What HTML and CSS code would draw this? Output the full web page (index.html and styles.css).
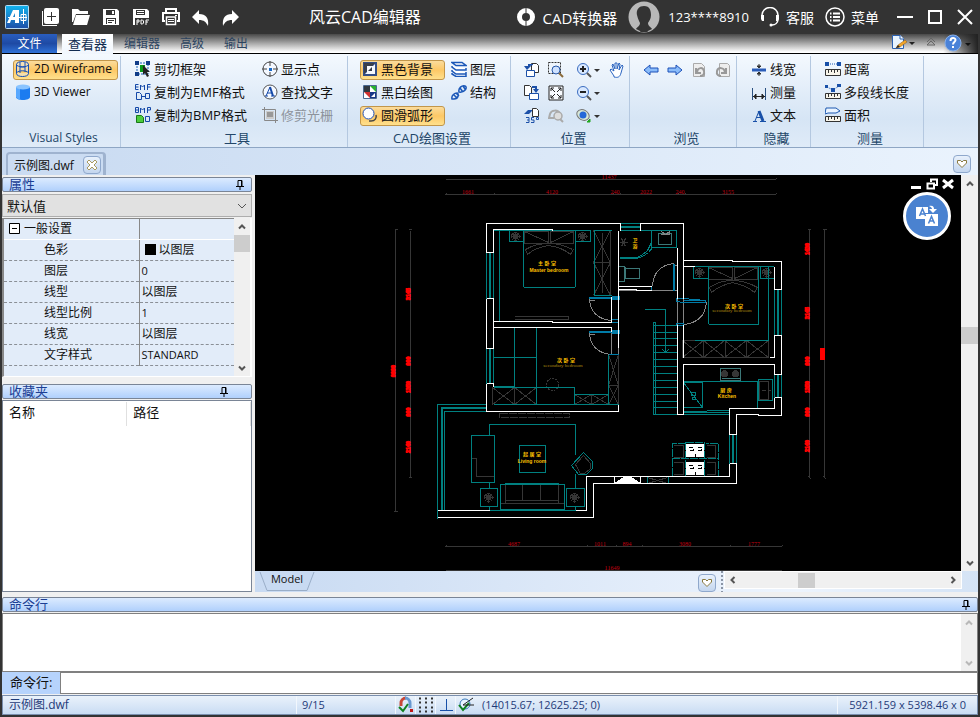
FILE: index.html
```html
<!DOCTYPE html>
<html lang="zh-CN">
<head>
<meta charset="utf-8">
<title>风云CAD编辑器</title>
<link rel="stylesheet" href="styles.css">
</head>
<body>
<div class="app">
<header class="titlebar">
  <svg class="logo" viewBox="0 0 24 24"><defs><linearGradient id="lg" x1="0" y1="0" x2="0" y2="1"><stop offset="0" stop-color="#12b4ee"/><stop offset="1" stop-color="#1d4fa8"/></linearGradient></defs><rect x=".5" y=".5" width="23" height="23" rx="1" fill="url(#lg)" stroke="#b8dcf4"/><path d="M2 18 8 5h6v13h-4v-3H6l-1 3z" fill="#fff"/><path d="M8 12l2-4v4z" fill="#1b83cc"/><path d="M3 12.500h19M18.500 4v15M16 9.500h5v6h-5z" stroke="#fff" fill="none"/></svg>
  <nav class="quick">
    <button aria-label="新建"><svg viewBox="0 0 20 20"><path d="M5 1h11a2 2 0 0 1 2 2v12a2 2 0 0 1-2 2H5a2 2 0 0 1-2-2V3a2 2 0 0 1 2-2z" fill="#fff"/><path d="M1.500 4v14.500H16" stroke="#fff" fill="none"/><path d="M10.500 5v9M6 9.500h9" stroke="#333"/></svg></button>
    <button aria-label="打开"><svg viewBox="0 0 20 20"><path d="M1 15V2h6l2 2h8v3H5L2 15z" fill="#fff"/><path d="M5 8h14l-3 10H2z" fill="#fff"/></svg></button>
    <button aria-label="保存"><svg viewBox="0 0 20 20"><path d="M2 2h14l2 2v14H2z" fill="#fff"/><path d="M5 3h9v5H5zM5 11h10v6H5z" fill="#333"/><path d="M11 4h2v3h-2zM6 12h8v5H6z" fill="#fff"/><path d="M7 13.500h6M7 15.500h4" stroke="#333"/></svg></button>
    <button aria-label="保存为PDF"><svg viewBox="0 0 20 20"><path d="M2 2h14l2 2v14H2z" fill="#fff"/><path d="M5 3h9v5H5zM4 11h14v7H4z" fill="#333"/><path d="M6 4.500h7M6 6.500h7M6 18v-5h2v2H6M10 13v4h1.500l1-1v-2l-1-1zM15 18v-5h3M15 15h2" stroke="#fff" fill="none"/></svg></button>
    <button aria-label="打印"><svg viewBox="0 0 20 20"><path d="M5 6V2h10v4M4 14H2V6h16v8h-2" fill="none" stroke="#fff" stroke-width="2"/><path d="M5.500 10h9v7.500h-9z" fill="none" stroke="#fff" stroke-width="1.500"/><path d="M7 12.500h6M7 14.500h6M14 8.500h2" stroke="#fff"/></svg></button>
    <button aria-label="撤销"><svg viewBox="0 0 20 20"><path d="M8 3v4c7 0 10 4 9 12-2-4-4-6-9-6v4L1 10z" fill="#fff"/></svg></button>
    <button aria-label="重做"><svg viewBox="0 0 20 20"><path d="M11 3v4C4 7 1 11 2 19c2-4 4-6 9-6v4l7-7z" fill="#fff"/></svg></button>
  </nav>
  <h1>风云CAD编辑器</h1>
  <div class="account">
    <button class="convert"><svg class="i20" viewBox="0 0 20 20"><circle cx="10" cy="10" r="6.500" fill="none" stroke="#fff" stroke-width="5"/><path d="M10 0v6M10 14v6" stroke="#333"/></svg>CAD转换器</button>
    <button class="user"><svg class="i32" viewBox="0 0 32 32"><circle cx="16" cy="16" r="15.500" fill="#b8b8b8"/><path d="M16 5c-6 0-8 5-7 9s2 6 3 8c0 3-3 4-4 6q8 5 16 0c-1-2-4-3-4-6 1-2 3-4 3-8s-1-9-7-9z" fill="#333"/><path d="M12 31c2-3 1-4 1-6h6c0 2-1 3 1 6z" fill="#333"/></svg>123****8910</button>
    <button><svg class="i20" viewBox="0 0 20 20"><path d="M2 11V8a8 7.500 0 0 1 16 0v4c0 4-3 6-6 6" fill="none" stroke="#fff" stroke-width="1.500"/><path d="M1 8h3v6H2l-1-2zM19 8h-3v6h2l1-2z" fill="#fff"/><circle cx="11" cy="18" r="1.500" fill="#fff"/></svg>客服</button>
    <button><svg class="i20" viewBox="0 0 20 20"><circle cx="10" cy="10" r="9" fill="none" stroke="#fff" stroke-width="1.500"/><path d="M5 6.500h1.500M5 10h1.500M5 13.500h1.500M8 6.500h7M8 10h7M8 13.500h7" stroke="#fff" stroke-width="2"/></svg>菜单</button>
  </div>
  <div class="winctl">
    <button aria-label="最小化"><svg viewBox="0 0 16 16"><path d="M0 8h16" stroke="#fff" stroke-width="2"/></svg></button>
    <button aria-label="最大化"><svg viewBox="0 0 16 16"><path d="M2 2h12v12H2z" fill="none" stroke="#fff" stroke-width="2"/></svg></button>
    <button aria-label="关闭"><svg viewBox="0 0 16 16"><path d="M1 1l14 14M15 1 1 15" stroke="#fff" stroke-width="2"/></svg></button>
  </div>
</header>

<div class="frame">
<nav class="tabs">
  <button class="file">文件</button><button class="tab on">查看器</button><button class="tab">编辑器</button><button class="tab">高级</button><button class="tab">输出</button>
  <div class="helpers">
    <button aria-label="样式"><svg class="w24" viewBox="0 0 24 17"><path d="M1.500 1.500h8l3 3v10h-11z" fill="#e8f4ff" stroke="#2a60b0"/><path d="M9 1v4h4" fill="#fff" stroke="#2a60b0"/><path d="M5 14l2-3 7-5 2 2-7 5z" fill="#f2a52a" stroke="#8a5a1a" stroke-width=".500"/><path d="M5 14l2-3 2 2z" fill="#222"/><path d="M18 8h6l-3 3z" fill="#222"/></svg></button>
    <button aria-label="折叠功能区"><svg class="i16" viewBox="0 0 16 16"><path d="M4 8l4-4 4 4M4 11l4-4 4 4z" fill="none" stroke="#666"/></svg></button>
    <button aria-label="帮助"><svg class="w30" viewBox="0 0 30 18"><circle cx="9" cy="9" r="8" fill="#4a82d8" stroke="#86aee8"/><path d="M6.500 7c0-4 5-3.500 5-1 0 2-2.500 2-2.500 4.500M9 12v2" fill="none" stroke="#fff" stroke-width="2"/><path d="M21 9h6l-3 3z" fill="#111"/></svg></button>
  </div>
</nav>

<section class="ribbon">
  <div class="group g1"><div class="tools">
    <button class="t on"><svg viewBox="0 0 16 16"><path d="M1.500 3.500v9c0 4 12 4 12 0v-9c0-4-12-4-12 0c0 3 12 3 12 0M5 1v11M10 1v10M1.500 12c2-3 10-3 12 0M5 6h5" fill="#e6f0ff" fill-opacity=".4" stroke="#1450b8"/></svg>2D Wireframe</button>
    <button class="t"><svg viewBox="0 0 16 16"><path d="M1 3v10c0 4 14 4 14 0V3z" fill="#1c7cf0"/><path d="M1 3v10q1 2 4 3V5z" fill="#58a8ff"/><ellipse cx="8" cy="3" rx="7" ry="2.500" fill="#8ac4ff"/></svg>3D Viewer</button>
  </div><h2>Visual Styles</h2></div>

  <div class="group g2"><div class="tools">
    <button class="t"><svg viewBox="0 0 16 16"><path d="M2 2h11v11H2z" fill="none" stroke="#1860b8" stroke-dasharray="2 1"/><path d="M0 0h4v4H0zM11 0h4v4h-4zM0 11h4v4H0z" fill="#103c88"/><path d="M5 4h5v7H5z" fill="#0a9a1a"/><path d="M8 4l7 7h-3l2 4-2 1-2-4-2 2z" fill="#222"/></svg>剪切框架</button>
    <button class="t"><svg viewBox="0 0 16 16"><path d="M3.500.5h-3v5h3M.5 3h3M5.500 6V1l2 2 2-2v5M12.500 6V.5h3M12.500 3h3M1.500 15.500v-7h3l2 2v5zM7 12.500h3M10.500 14.500v-5h4v5z" fill="none" stroke="#1448a8"/></svg>复制为EMF格式</button>
    <button class="t"><svg viewBox="0 0 16 16"><path d="M.5 5.500v-5h3v5zM.5 3h3M5.500 6V1l2 2 2-2v5M12.500 6V.5h3V3h-3M10.500 14.500v-5h4v5z" fill="none" stroke="#1448a8"/><path d="M1.500 8.500h5l2 2v5h-7z" fill="#4ccc3c" stroke="#187818"/></svg>复制为BMP格式</button>
    <button class="t"><svg viewBox="0 0 16 16"><circle cx="8" cy="8" r="7" fill="#f4f8ff" stroke="#444"/><path d="M8 0v5M8 11v5M0 8h5M11 8h5" stroke="#444"/><path d="M7 7h3v3H7z" fill="#1468c8"/></svg>显示点</button>
    <button class="t"><svg viewBox="0 0 16 16"><circle cx="8" cy="8" r="7" fill="#f4f8ff" stroke="#555"/><path d="M4 12 8 3M5 9h5M3 12h3M9 12h4" fill="none" stroke="#1448a8"/><path d="M8 3l3 9" stroke="#1448a8" stroke-width="2"/></svg>查找文字</button>
    <button class="t" disabled><svg viewBox="0 0 16 16"><path d="M2.500 0v13.500H16M0 2.500h13.500V16" fill="none" stroke="#888"/><path d="M4 4h8v8H4z" fill="#ccc"/><path d="M5 5h6v5H5z" fill="#999"/></svg>修剪光栅</button>
  </div><h2>工具</h2></div>

  <div class="group g3"><div class="tools">
    <button class="t on"><svg viewBox="0 0 16 16"><path d="M1 1h14v14H1z" fill="#334d86"/><path d="M2 2h11L2 13z" fill="#3a3f4a"/><path d="M13 3v10H3z" fill="#f4f7fc"/><path d="M5 5h6v6H5z" fill="#f8faff"/><path d="M6 10l4-4v4z" fill="#333a48"/></svg>黑色背景</button>
    <button class="t"><svg viewBox="0 0 16 16"><path d="M1.500 1.500h13v13h-13z" fill="#fff" stroke="#4a6890"/><path d="M2 2h6v6H2z" fill="#303840"/><path d="M8 2h6v6z" fill="#28b030"/><path d="M2 8h6v6z" fill="#d03030"/><path d="M8 8h6v6H8z" fill="#183888"/><path d="M9 13l4-4v4z" fill="#fff"/></svg>黑白绘图</button>
    <button class="t on"><svg viewBox="0 0 16 16"><path d="M14 8c1 3-1 6-5 6H7" fill="none" stroke="#444" stroke-width="1.500"/><circle cx="6.500" cy="6.500" r="5.500" fill="#fff" stroke="#1e50b8"/></svg>圆滑弧形</button>
    <button class="t"><svg viewBox="0 0 16 16"><path d="M1 1.500h10l4 3H5zM1 5v1l4 3h10v-2M1 9v1l4 3h10v-2M1 12v1l4 2.500h10v-2" fill="#fff" stroke="#1c58b8" stroke-width="1.500"/></svg>图层</button>
    <button class="t"><svg viewBox="0 0 16 16"><path d="M1 15c-1-4 3-6 5-6s2 6-3 6zM8 8c-1-4 3-7 6-6s0 7-6 6zM3 11l3 3M5 9l3 3M9 4l3 4M12 2l2 3" fill="none" stroke="#1c58b8" stroke-width="1.500"/></svg>结构</button>
  </div><h2>CAD绘图设置</h2></div>

  <div class="group g4"><div class="tools icons">
    <button aria-label="左旋"><svg viewBox="0 0 16 16"><path d="M7.500 1.500h5l2 2v7h-7z" fill="#fff" stroke="#333"/><path d="M2.500 8.500h8v6h-8z" fill="#fff" stroke="#1c50a8"/><path d="M9 2H4v2H0l3 4 4-4H6l3-1z" fill="#1c50a8"/></svg></button>
    <button aria-label="右旋"><svg viewBox="0 0 16 16"><path d="M.5.5h5l2 2v8h-7z" fill="#fff" stroke="#333"/><path d="M5.500 8.500h9v6h-9z" fill="#fff" stroke="#1c50a8"/><path d="M8 1h5v3h2l-3 4-3-4h2V3H8z" fill="#1c50a8"/></svg></button>
    <button aria-label="旋转35度"><svg viewBox="0 0 16 16"><path d="M8.500.5h4l2 2v6h-6z" fill="#fff" stroke="#333"/><path d="M8 2H4L0 6h5l3-3z" fill="#1c50a8"/><path d="M2 9.500h3v5H2M3 12h2M10 9.500H7.500V12H10v2.500H7M12.500 9.500h2v2h-2z" fill="none" stroke="#1c50a8"/></svg></button>
    <button aria-label="窗口缩放"><svg viewBox="0 0 16 16"><path d="M.5.500h12v11H.5z" fill="none" stroke="#333" stroke-dasharray="2 1"/><circle cx="8" cy="8" r="4" fill="#cfe2ff" stroke="#2858a8"/><path d="M11 11l4 4" stroke="#8a6a3a" stroke-width="2"/></svg></button>
    <button aria-label="全部显示"><svg viewBox="0 0 16 16"><path d="M1 1h14v14H1z" fill="#f8fbff" stroke="#222"/><path d="M3 6V3h3M10 3h3v3M13 10v3h-3M6 13H3v-3M3 3l4 4M13 3 9 7M13 13 9 9M3 13l4-4" fill="none" stroke="#222"/></svg></button>
    <button aria-label="上一视图" disabled><svg viewBox="0 0 16 16"><path d="M6 10H1l1-4c1-4 8-5 10 0" fill="none" stroke="#aaa" stroke-width="2"/><circle cx="10" cy="8" r="4" fill="#ddd" stroke="#aaa" stroke-width="1.500"/><path d="M12 11l3 3" stroke="#aaa" stroke-width="2"/></svg></button>
    <button aria-label="放大"><svg class="wide" viewBox="0 0 24 16"><circle cx="7" cy="7" r="5.500" fill="#d8e8ff" stroke="#3a6cc0"/><path d="M11 11l4 4" stroke="#555" stroke-width="2"/><path d="M4 7h6M7 4v6" stroke="#222" stroke-width="2"/><path d="M18 7h6l-3 3z" fill="#333"/></svg></button>
    <button aria-label="缩小"><svg class="wide" viewBox="0 0 24 16"><circle cx="7" cy="7" r="5.500" fill="#d8e8ff" stroke="#3a6cc0"/><path d="M11 11l4 4" stroke="#555" stroke-width="2"/><path d="M4 7h6" stroke="#222" stroke-width="2"/><path d="M18 7h6l-3 3z" fill="#333"/></svg></button>
    <button aria-label="视图"><svg class="wide" viewBox="0 0 24 16"><ellipse cx="7" cy="7" rx="6.500" ry="5" transform="rotate(30 7 7)" fill="#d8e8d8" stroke="#777"/><circle cx="7" cy="7" r="3.500" fill="#2468d8"/><path d="M11 14h3v-3z" fill="#22a822" stroke="#22a822"/><path d="M18 7h6l-3 3z" fill="#333"/></svg></button>
    <button aria-label="平移"><svg viewBox="0 0 16 16"><path d="M5 14 1 8l1-1 3 2-2-6 1-1 2 5V1h2v6l2-6 1 1-1 6 3-5 1 1-2 7c-1 4-3 5-7 4z" fill="#fff" stroke="#2a64c0"/></svg></button>
  </div><h2>位置</h2></div>

  <div class="group g5"><div class="tools nav">
    <button aria-label="后退"><svg viewBox="0 0 16 16"><path d="M1 8l6-5v3h8v4H7v3z" fill="#8abcfa" stroke="#1c50b8"/></svg></button>
    <button aria-label="前进"><svg viewBox="0 0 16 16"><path d="M15 8 9 3v3H1v4h8v3z" fill="#8abcfa" stroke="#1c50b8"/></svg></button>
    <button aria-label="上一页" disabled><svg viewBox="0 0 16 16"><path d="M2.500 1.500h8l3 3v10h-11z" fill="#eee" stroke="#aaa"/><path d="M5 6v5h5M6 10c1-5 6-5 7-1s-2 5-4 5" fill="none" stroke="#999" stroke-width="2"/></svg></button>
    <button aria-label="下一页" disabled><svg viewBox="0 0 16 16"><path d="M4.500 1.500h8l2 2v11h-10z" fill="#eee" stroke="#aaa"/><path d="M11 6v5H6M10 10c-1-5-7-5-8-1s2 5 4 5" fill="none" stroke="#999" stroke-width="2"/></svg></button>
  </div><h2>浏览</h2></div>

  <div class="group g6"><div class="tools">
    <button class="t"><svg viewBox="0 0 16 16"><path d="M1 9h14" stroke="#2a5cb8" stroke-width="3"/><path d="M8 3v4M8 11v4M6 5h4L8 7zM6 13h4l-2-2z" stroke="#333" fill="#333"/></svg>线宽</button>
    <button class="t"><svg viewBox="0 0 16 16"><path d="M1.500 4v12M14.500 4v12" stroke="#2a5080"/><path d="M2 12.500h12M5 10l-2 2.500L5 15zM11 10l2 2.500-2 2.500z" stroke="#222" fill="#222"/></svg>测量</button>
    <button class="t"><svg viewBox="0 0 16 16"><path d="M2 14.500h4M9 14.500h6M4 14 8 4M5 10.500h5" fill="none" stroke="#1850a8"/><path d="M8 4l4 10" stroke="#1850a8" stroke-width="3"/></svg>文本</button>
  </div><h2>隐藏</h2></div>

  <div class="group g7"><div class="tools">
    <button class="t"><svg viewBox="0 0 16 16"><path d="M3 3h10" stroke="#1c58b0" stroke-dasharray="1 1"/><path d="M0 1h4v4H0zM12 1h4v4h-4z" fill="#1850a8"/><path d="M.5 8.500h15v6H.5z" fill="#f8f5ea" stroke="#333"/><path d="M3.500 9v3M6.500 9v2M9.500 9v3M12.500 9v2" stroke="#333"/></svg>距离</button>
    <button class="t"><svg viewBox="0 0 16 16"><path d="M2 3l6 3 6-4" stroke="#1c58b0" stroke-dasharray="1 1" fill="none"/><path d="M0 1h3v3H0zM6 4h4v4H6zM12 0h4v3h-4z" fill="#1850a8"/><path d="M.5 9.500h15v5H.5z" fill="#f8f5ea" stroke="#333"/><path d="M3.500 10v3M6.500 10v2M9.500 10v3M12.500 10v2" stroke="#333"/></svg>多段线长度</button>
    <button class="t"><svg viewBox="0 0 16 16"><path d="M1 1h10l4 3-4 2H3l-3 1z" fill="#eaf4ff" stroke="#1c58b0"/><path d="M.5 9.500h15v5H.5z" fill="#f8f5ea" stroke="#333"/><path d="M3.500 10v3M6.500 10v2M9.500 10v3M12.500 10v2" stroke="#333"/></svg>面积</button>
  </div><h2>测量</h2></div>
</section>

<div class="docs">
  <div class="doc"><span>示例图.dwf</span><button aria-label="关闭文档"><svg viewBox="0 0 12 12"><path d="M1 3l2-2 3 3 3-3 2 2-3 3 3 3-2 2-3-3-3 3-2-2 3-3z" fill="#fff" stroke="#a89a60"/></svg></button></div>
  <button class="heart" aria-label="文档列表"><svg viewBox="0 0 12 12"><path d="M1.500 4V2.500h3L6 4l1.500-1.500h3V5L6 9.500 1.500 5z" fill="#fff" stroke="#8a7a40"/></svg></button>
</div>

<main class="work">
  <aside class="side">
    <div class="head"><h3>属性</h3><svg class="pin" viewBox="0 0 8 10"><path d="M2 6V.5h4V6M0 6.500h8M4 7v3M5.500 1v5" fill="none" stroke="#000"/></svg></div>
    <div class="pick"><select aria-label="对象"><option>默认值</option></select><svg viewBox="0 0 10 6"><path d="M1 1l4 4 4-4" fill="none" stroke="#555"/></svg></div>
    <div class="props">
      <table>
        <tr class="sec"><th><svg viewBox="0 0 11 11"><path d="M.5.5h10v10H.5zM3 5.500h5" fill="#fff" stroke="#000"/></svg>一般设置</th><td></td></tr>
        <tr><th>色彩</th><td><i class="swatch"></i>以图层</td></tr>
        <tr><th>图层</th><td>0</td></tr>
        <tr><th>线型</th><td>以图层</td></tr>
        <tr><th>线型比例</th><td>1</td></tr>
        <tr><th>线宽</th><td>以图层</td></tr>
        <tr><th>文字样式</th><td>STANDARD</td></tr>
      </table>
      <div class="vbar"><button aria-label="向上"><svg viewBox="0 0 8 8"><path d="M1 5.500l3-3 3 3" fill="none" stroke="#555" stroke-width="2"/></svg></button><i class="thumb"></i><button class="end" aria-label="向下"><svg viewBox="0 0 8 8"><path d="M1 2.500l3 3 3-3" fill="none" stroke="#555" stroke-width="2"/></svg></button></div>
    </div>
    <div class="head fav"><h3>收藏夹</h3><svg class="pin" viewBox="0 0 8 10"><path d="M2 6V.5h4V6M0 6.500h8M4 7v3M5.500 1v5" fill="none" stroke="#000"/></svg></div>
    <div class="favlist"><table><tr><th>名称</th><th>路径</th></tr></table></div>
  </aside>

  <section class="view">
    <div class="canvas">
      <svg class="plan" viewBox="255 175 706 396" shape-rendering="crispEdges">
       <defs>
        <g id="lamp"><circle r="4"/><path d="M-5 0h10M0-5v10M-3-3l6 6M-3 3l6-6"/><circle r="2"/></g>
       </defs>
       <g fill="none" stroke-width="1" transform="translate(-.5 .5)">
        <g stroke="#363636">
          <path d="M446 179H776M446 194H776M446 546H782M446 570H782M810 229V477M825 229V477M396 229V511M411 230V477"/>
          <path d="M445 195l2-2M493 195l2-2M612 195l2-2M619 195l2-2M677 195l2-2M684 195l2-2M775 195l2-2M775 180l2-2M445 547l2-2M586 547l2-2M615 547l2-2M641 547l2-2M729 547l2-2M781 547l2-2M808 229h3M823 229h4M809 476l3 3M824 476l3 3M395 229h3M409 229h3M394 511h4M409 477h3"/>
          <path d="M525 231h24v12h-24zM551 231h23v12h-23zM525 231l24 11M551 242l23-11M526 249q10-6 23-6t24 6M526 249l2 5q8-7 21-9 14 2 22 9l3-5M515 316h54v3h-54"/>
          <path d="M594 230h17v65M594 230l17 32-17 33M611 230l-17 32 17 33M594 262h17M603 232v60"/>
          <path d="M493 387l22 17 22-17M493 404l22-17 22 17M515 387v17M493 387v17M575 394l17 10 17-10M575 404l17-10 17 10M592 394v10M609 354l10 31M619 354l-10 31M609 385h10M609 385l10 19M619 385l-10 19M619 354v50"/>
          <circle cx="553" cy="384" r="6" stroke-dasharray="2 1"/>
          <path d="M500 413h70v4h-70z" stroke-dasharray="8 1"/>
          <path d="M471 458h6v18h18M506 484v16h53v-16M523 484v16M541 484v16M501 503h64M506 500v3M559 500v3"/>
          <path d="M709 267h24v12h-24zM735 267h23v12h-23zM709 267l24 11M735 278l23-11M710 287q10-7 23-7t25 7M710 287l2 5q8-7 21-10 14 3 22 10l3-5"/>
          <path d="M683 340h86v17h-86zM683 340l21 17 21-17 22 17 22-17M683 357l21-17 21 17 22-17 22 17M704 340v17M726 340v17M747 340v17"/>
          <path d="M760 381h9v18h-9zM762 390h4M769 390h2M648 477l20 6M648 483l20-6M674 445h10v12h-10M674 462h10v12h-10M707 445h9v12h-9M707 462h9v12h-9"/>
          <path d="M576 464l8-9 7 8v5l-6 5h-4z"/>
          <use href="#lamp" x="516" y="236"/><use href="#lamp" x="583" y="236"/><use href="#lamp" x="700" y="272"/><use href="#lamp" x="767" y="272"/><use href="#lamp" x="489" y="497"/><use href="#lamp" x="575" y="497"/>
          <path d="M620 242h8M622 238l4 8M626 238l-4 8"/>
          <circle cx="725" cy="373" r="3" fill="#363636"/><circle cx="736" cy="373" r="3" fill="#363636"/>
        </g>
        <g stroke="#008080">
          <path d="M487 252v46M490 252v46M491 252v46M494 252v46M487 348v35M490 348v35M491 348v35M494 348v35M500 230v91M494 230h97M510 230v11h14M591 230v11h-16M524 230v56l1 1h50l1-1v-56M595 230v65h17M594 230h18"/>
          <path d="M621 223h20M621 227h20M621 226h20M621 230h20M641 230h36v17h-25v-17M652 230v12l-4 8-6 5-5 2h-17M653 247l-4 5-6 4-6 2h-17"/>
          <path d="M515 327v59h-21M537 327v77M494 357h43M494 387h81v17M575 394h34M609 354v50M494 404h125"/>
          <path d="M487 404h-49v114M487 407h-45v103M487 408h-44v102M487 411h-42v99M490 435v-11h86v30M576 473v15M490 482v6M490 506v4h86v-4M472 435h23v47h-23zM520 445h26v27h-26zM481 488h17v18h-17zM567 488h18v18h-18zM501 484h64v26h-64zM506 484v-1h53v1M501 509h64"/>
          <path d="M572 465l12-13 9 9v7l-6 6h-8zM648 476v7h21v-7z"/>
          <path d="M654 414V322h2v92M654 325h23M654 332h23M654 338h23M654 345h23M654 352h23M654 359h23M654 366h23M654 373h23M654 380h23M654 387h23M654 394h23M654 401h23M654 407h23M654 414h23M645 309h21v42M663 349l3 3 3-3M664 352h4"/>
          <path d="M695 266h79M694 266v12h15M709 266v57l1 1h49v-58M761 266v12h14M769 266v74h-74M775 289v46M778 289v46M779 289v46M782 289v46M775 374v23M778 374v23M779 374v23M782 374v23"/>
          <path d="M683 381h75M758 381v27M684 382h19v25h-19zM684 382l19 25M759 379h14v21h-14zM684 411h23M684 412h46M707 410h23M684 414h46M692 392h4v3h-4zM693 397h3v2h-3zM730 434v29M733 434v29M734 434v29M737 434v29"/>
          <path d="M721 368h20v12h-20zM722 378h18" stroke="#3c7878"/>
          <path d="M659 233h13v11h-13zM626 268h14v10h-14zM619 266h6l1 2v10l-2 3h-5M625 266v15" stroke="#3c7878"/>
          <path d="M686 443h-13v15h46v-15h-13M673 458v18h46v-18M686 442h19v34h-19z" stroke-dasharray="8 1"/>
        </g>
        <g stroke="#858585">
          <path d="M590 298q1 20 22 22M590 332q1 20 22 22M653 286q1-21 22-23M707 302q-2 20-23 22M684 298v26M678 298v26M619 290h58M612 296v24M619 296v58M612 331v22M662 231l4 3 4-3v3h-9M590 300h5M590 334h5M674 265h4"/>
        </g>
        <g stroke="#007ba7">
          <path d="M589 297h31M589 298h31M612 296h8v3h-8M612 319h7v3h-7zM589 331h31M589 332h31M612 330h8v3h-8M609 354h10M674 263v27M675 263v27M652 286v4M677 298h7l22 2v2h-22l-7-1zM684 300h22M677 323h7v2h-7z"/>
        </g>
        <g stroke="#fff">
          <path d="M494 252h-7v-29H621v7M641 230v-7h43V298M487 298h7M494 252v-23h59v1M487 298v50h7v-50M487 383h7v3M487 383v28h132v-7M494 321h59v1h59M612 321V296M494 348v-21h118v4M619 230v117M619 286h33M619 289h18v1h15M678 247v51M678 324v90h6v-50h91v10h7v-39h-7v22h-5M684 324v33M684 260h49v1h49v28h-7v-23M684 266h11M775 397h7v18h-23v-1h-22v20h-7v-26h45v-11M730 463h7v20H594v34H438M730 463v13H587v34h-11M490 510h-52M615 476v7M641 476v7"/>
          <path d="M615 483l11-7h4l11 7z" fill="#fff"/><path d="M687 444h17v12h-17zM687 462h17v12h-17z" fill="#fff"/>
          <g stroke="#000"><path d="M689 447h4M698 447h4M690 450h4v-2M698 450h4v-2M696 453v3M689 465h4M698 465h4M690 468h4v-2M698 468h4v-2M696 471v3"/></g>
        </g>
       </g>
       <g class="dim"><text x="609" y="179">11437</text><text x="468" y="194">1661</text><text x="552" y="194">4120</text><text x="615" y="194">240</text><text x="646" y="194">2022</text><text x="680" y="194">240</text><text x="728" y="194">3155</text><text x="514" y="546">4687</text><text x="600" y="546">1011</text><text x="627" y="546">894</text><text x="685" y="546">3080</text><text x="754" y="546">1777</text><text x="612" y="570">11649</text></g>
       <g class="vdim">
        <text transform="translate(410 294) rotate(-90)">3145</text><text transform="translate(410 361) rotate(-90)">900</text><text transform="translate(410 387) rotate(-90)">1350</text><text transform="translate(410 412) rotate(-90)">900</text><text transform="translate(410 447) rotate(-90)">2140</text><text transform="translate(395 371) rotate(-90)">9990</text>
        <text transform="translate(809 249) rotate(-90)">1430</text><text transform="translate(809 313) rotate(-90)">3145</text><text transform="translate(809 361) rotate(-90)">900</text><text transform="translate(809 387) rotate(-90)">1350</text><text transform="translate(809 412) rotate(-90)">900</text><text transform="translate(809 446) rotate(-90)">2140</text>
        <rect x="820" y="348" width="5" height="12"/>
       </g>
       <g class="room"><text x="547" y="265">主 卧 室</text><text x="549" y="272">Master bedroom</text><text x="635" y="242">卫</text><text x="635" y="248">浴</text><text x="566" y="362">次 卧 室</text><text x="532" y="456">起 居 室</text><text x="532" y="463">Living room</text><text x="734" y="308">次 卧 室</text><text x="726" y="392">厨 房</text><text x="727" y="398">Kitchen</text></g>
       <g class="thin"><text x="563" y="367">secondary bedroom</text><text x="732" y="312">secondary bedroom</text></g>
      </svg>
      <div class="mdi"><button aria-label="最小化图纸"><svg viewBox="0 0 12 12"><path d="M1 8h10v3H1z" fill="#fff"/></svg></button><button aria-label="还原图纸"><svg viewBox="0 0 12 12"><path d="M5 4V1.500h6V7H8M1.500 5.500H8v5H1.500z" fill="none" stroke="#fff" stroke-width="2"/></svg></button><button aria-label="关闭图纸"><svg viewBox="0 0 12 12"><path d="M1 2l10 8M11 2 1 10" stroke="#fff" stroke-width="3"/></svg></button></div>
      <button class="translate" aria-label="翻译"><svg viewBox="0 0 24 24"><path d="M1 3h12v12H1zM10 10h13v12H10z" fill="#fff"/><path d="M4.500 12l3-7 3 7M5.500 10h4M13.500 19.500l3-7 3 7M14.500 17h4" fill="none" stroke="#4a82d0" stroke-width="1.500"/><path d="M9.500 9.500h14" stroke="#4a82d0"/><path d="M14 2c4-1 5 1 5 3h3l-4 4-4-4h3c0-1-1-2-3-3z" fill="#fff"/></svg></button>
    </div>
    <div class="vbar main"><button aria-label="向上滚动"><svg viewBox="0 0 8 8"><path d="M1 5.500l3-3 3 3" fill="none" stroke="#555" stroke-width="2"/></svg></button><i class="thumb"></i><button class="end" aria-label="向下滚动"><svg viewBox="0 0 8 8"><path d="M1 2.500l3 3 3-3" fill="none" stroke="#555" stroke-width="2"/></svg></button></div>
    <div class="sheets">
      <button class="sheet"><svg viewBox="0 0 56 20"><path d="M1 0l7 18.500h40L55 0" fill="#c8daf2" stroke="#9aaec8"/></svg><span>Model</span></button>
      <button class="heart" aria-label="布局列表"><svg viewBox="0 0 12 12"><path d="M1.500 4V2.500h3L6 4l1.500-1.500h3V5L6 9.500 1.500 5z" fill="#fff" stroke="#8a7a40"/></svg></button>
      <i class="grip"></i>
      <div class="hbar"><button aria-label="向左滚动"><svg viewBox="0 0 8 8"><path d="M5.500 1l-3 3 3 3" fill="none" stroke="#555" stroke-width="2"/></svg></button><i class="thumb"></i><button class="end" aria-label="向右滚动"><svg viewBox="0 0 8 8"><path d="M2.500 1l3 3-3 3" fill="none" stroke="#555" stroke-width="2"/></svg></button></div>
    </div>
  </section>
</main>

<section class="cmd">
  <div class="head"><h3>命令行</h3><svg class="pin" viewBox="0 0 8 10"><path d="M2 6V.5h4V6M0 6.500h8M4 7v3M5.500 1v5" fill="none" stroke="#000"/></svg></div>
  <div class="log"><textarea aria-label="命令历史" readonly></textarea><div class="vbar off"><button aria-label="历史向上"><svg viewBox="0 0 8 8"><path d="M1 5.500l3-3 3 3" fill="none" stroke="#b8b8b8" stroke-width="2"/></svg></button><button class="end" aria-label="历史向下"><svg viewBox="0 0 8 8"><path d="M1 2.500l3 3 3-3" fill="none" stroke="#b8b8b8" stroke-width="2"/></svg></button></div></div>
  <div class="line"><label for="cmd">命令行:</label><input id="cmd" type="text"></div>
</section>

<footer class="status">
  <span class="name">示例图.dwf</span><span class="count">9/15</span>
  <button aria-label="捕捉"><svg viewBox="0 0 16 18"><path d="M3 10V7a5 5 0 0 1 5-5" fill="none" stroke="#c84838" stroke-width="3"/><path d="M7 2a5 5 0 0 1 5 5v5" fill="none" stroke="#6898d0" stroke-width="3"/><path d="M1 11l4 4 5-7" fill="none" stroke="#108020" stroke-width="2"/><path d="M12 13h3v3h-3z" fill="#c01818"/></svg></button>
  <button aria-label="栅格"><svg viewBox="0 0 16 18"><path d="M1 2.500h14M1 6.500h14M1 11.500h14M1 15.500h14" stroke="#333" stroke-width="2" stroke-dasharray="2 4"/></svg></button>
  <button aria-label="正交"><svg viewBox="0 0 16 18"><path d="M8.500 3v11M2 14.500h13" stroke="#1850a8"/></svg></button>
  <button aria-label="极轴"><svg viewBox="0 0 16 18"><circle cx="7" cy="8" r="5" fill="#e8f4ff" stroke="#3878b8"/><path d="M1 9l4 5 6-7" fill="none" stroke="#108020" stroke-width="2"/><path d="M5 9l10-7M5 9h11" stroke="#222"/></svg></button>
  <span class="coord">(14015.67; 12625.25; 0)</span><span class="size">5921.159 x 5398.46 x 0</span>
</footer>
</div>
</div>
</body>
</html>
```
FILE: styles.css
```css
* { box-sizing: border-box; }
body { margin: 0; background: #333; font: 13px "Open Sans", "Noto Sans CJK SC", sans-serif; color: #111; }
button { border: 0; padding: 0; margin: 0; background: none; font: inherit; color: inherit; display: flex; align-items: center; justify-content: center; white-space: nowrap; }
h1, h2, h3 { margin: 0; font-weight: 400; }
svg { display: block; flex: none; }
i { display: block; }
.app { display: flex; flex-direction: column; height: 100vh; min-height: 600px; }

.titlebar { height: 34px; flex: none; display: flex; align-items: center; background: #333; color: #fff; padding: 0 7px 0 5px; }
.logo { width: 24px; height: 24px; }
.quick { display: flex; margin-left: 7px; }
.quick button { width: 30px; }
.quick svg, .i20 { width: 20px; height: 20px; }
.titlebar h1 { font-size: 16px; line-height: 24px; margin-left: 63px; }
.account { display: flex; gap: 11px; margin-left: auto; font-size: 14px; }
.account button { gap: 6px; }
.account .convert { font-size: 15px; }
.account .user { gap: 8px; font-size: 13px; }
.i32 { width: 32px; height: 32px; }
.winctl { display: flex; gap: 14px; margin-left: 18px; }
.winctl svg, .i16 { width: 16px; height: 16px; }

.frame { flex: 1; min-height: 0; display: flex; flex-direction: column; margin: 0 2px 2px; background: #f0f0f0; }
.tabs { height: 20px; flex: none; display: flex; background: linear-gradient(#484848, #aaa 50%, #fff 95%); border-bottom: 1px solid #000; font-size: 12px; line-height: 18px; color: #2c435f; }
.file { width: 55px; background: linear-gradient(#2a5ec0, #1e4aa4 50%, #2f72d8); color: #fff; margin-right: 5px; }
.tab { padding: 0 6px; margin-right: 8px; }
.tab.on { font-size: 13px; height: 20px; background: linear-gradient(#fff, #f0f6fd); color: #122c50; margin-right: 5px; }
.helpers { display: flex; margin-left: auto; align-items: flex-start; background: linear-gradient(90deg, transparent 60%, #222); padding-right: 4px; }
.helpers .i16 { margin: 0 5px 0 8px; }
.w24 { width: 24px; height: 17px; }
.w30 { width: 30px; height: 18px; }

.ribbon { flex: none; height: 94px; display: flex; background: linear-gradient(#f4f9fe, #e2edf9 40%, #d6e5f5 70%, #dfebf8); border-bottom: 1px solid #8ea6c4; font-size: 13px; }
.group { flex: none; display: flex; flex-direction: column; justify-content: space-between; border-right: 1px solid #b4c8e0; margin-top: 2px; padding-top: 4px; }
.g1 { width: 119px; padding-left: 11px; }
.g2 { width: 227px; padding-left: 12px; }
.g3 { width: 163px; padding-left: 12px; }
.g4 { width: 119px; padding-left: 13px; }
.g5 { width: 107px; padding-left: 13px; }
.g6 { width: 74px; padding-left: 12px; }
.g7 { width: 113px; padding-left: 12px; }
.tools { display: grid; grid-template-rows: repeat(3, 20px); grid-auto-flow: column; row-gap: 3px; justify-content: start; }
.g2 .tools { grid-template-columns: 127px auto; }
.g3 .tools { grid-template-columns: 85px auto; column-gap: 4px; }
.g1 .tools { grid-template-columns: 105px; font-size: 12px; }
.tools svg { width: 16px; height: 16px; }
.tools svg.wide { width: 24px; }
.tools.icons { grid-template-columns: 24px 28px 33px 16px; justify-items: start; }
.tools.nav { grid-auto-flow: row; grid-template-columns: repeat(4, 16px); column-gap: 8px; }
.t { gap: 3px; padding: 0 1px 2px; border: 1px solid transparent; border-radius: 3px; justify-content: flex-start; line-height: 16px; }
.t.on { background: linear-gradient(#fbdc9c, #fdc866 50%, #ffe08c); border-color: #c2964a; }
.t:disabled { color: #8d939b; }
.group h2 { font-size: 13px; line-height: 18px; text-align: center; color: #234668; padding-right: 6px; }
.group.g1 h2 { font-size: 12px; }

.docs { flex: none; height: 27px; display: flex; justify-content: space-between; align-items: flex-end; padding: 0 7px 0 4px; background: linear-gradient(90deg, #c8daf1, #eaf3fd); }
.doc { display: flex; align-items: center; gap: 9px; height: 23px; border: 2px solid #9fb3cf; border-bottom: 0; border-right-width: 3px; border-radius: 4px 4px 0 0; padding: 0 2px 0 6px; font-size: 12px; background: #cbdcf2; }
.doc button, .heart { width: 18px; height: 18px; border: 1px solid #8fa8cc; border-radius: 4px; background: linear-gradient(#e8f1fc, #c4d6ee); }
.doc button svg, .heart svg { width: 12px; height: 12px; }
.docs .heart { margin-bottom: 2px; }

.work { flex: 1; min-height: 0; display: flex; gap: 3px; }
.side { width: 250px; flex: none; display: flex; flex-direction: column; padding: 2px 0 4px; }
.head { flex: none; height: 15px; display: flex; align-items: center; justify-content: space-between; border: 1px solid #7a8596; border-radius: 2px; background: linear-gradient(#dcebff, #b0d0fc); padding: 0 7px 0 6px; color: #1c3f94; }
.head h3 { font-size: 13px; line-height: 13px; }
.pin { width: 8px; height: 10px; }
.pick { display: grid; align-items: center; margin: 2px 0 1px; border: 1px solid #adadad; background: #e1e1e1; height: 23px; }
.pick select, .pick svg { grid-area: 1 / 1; }
.pick select { appearance: none; border: 0; background: none; font: inherit; line-height: 20px; height: 21px; padding: 0 4px; color: #111; width: 100%; }
.pick svg { width: 10px; height: 6px; justify-self: end; margin-right: 4px; }
.props { flex: none; height: 159px; display: flex; border-left: 2px solid #888; border-right: 2px solid #fff; border-bottom: 1px solid #fff; background: #e2ecf9; }
.props table { flex: 1; border-collapse: collapse; table-layout: fixed; font-size: 12px; align-self: flex-start; border-top: 1px solid #888; }
.props th, .props td { height: 21px; padding: 0; font-weight: 400; text-align: left; line-height: 20px; border-bottom: 1px dashed #8a8f96; }
.props th { width: 135px; padding-left: 40px; border-right: 1px solid #888; }
.props td { padding-left: 2px; font-size: 12px; }
.props tr:nth-child(3) td, .props tr:nth-child(5) td, .props tr:nth-child(7) td { font-size: 11px; }
.props .sec th { padding-left: 5px; }
.props .sec th, .props .sec td { border-bottom: 1px solid #fff; }
.sec svg { width: 11px; height: 11px; display: inline-block; margin-right: 4px; vertical-align: -1px; }
.swatch { display: inline-block; width: 11px; height: 11px; background: #000; margin: 0 3px 0 3px; vertical-align: -1px; }
.vbar { width: 16px; flex: none; display: flex; flex-direction: column; background: #f0f0f0; }
.vbar button { height: 17px; width: 100%; }
.vbar svg, .hbar svg { width: 8px; height: 8px; }
.vbar .end { margin-top: auto; }
.vbar .thumb { height: 17px; background: #cdcdcd; }
.fav { margin-top: 7px; padding-right: 23px; }
.favlist { flex: 1; background: #fff; border: 1px solid #7a8596; margin-top: 1px; padding-top: 1px; }
.favlist table { width: 100%; border-collapse: collapse; }
.favlist th { height: 24px; width: 50%; padding: 0 6px 4px; font-weight: 400; line-height: 18px; text-align: left; border-right: 1px solid #e0e0e0; }

.view { flex: 1; min-width: 0; display: grid; grid-template: 1fr 21px 4px / 1fr 17px; }
.canvas { position: relative; background: #000; min-height: 0; overflow: hidden; }
.plan { width: 100%; height: 100%; }
.dim text, .vdim text { font: 6px "Liberation Serif", serif; fill: #c00010; text-anchor: middle; }
.vdim text { font-weight: 700; fill: #f00; stroke: #f00; }
.vdim rect { fill: #f00; }
.room text { font: 700 5px "Liberation Sans", "Noto Sans CJK SC", sans-serif; fill: #ffc000; text-anchor: middle; }
.thin text { font: 5px "Liberation Serif", serif; fill: #b08a10; text-anchor: middle; }
.mdi { position: absolute; top: 3px; right: 7px; display: flex; gap: 4px; }
.mdi svg { width: 12px; height: 12px; }
.translate { position: absolute; top: 17px; right: 10px; width: 48px; height: 48px; border-radius: 50%; border: 3px solid #fff; background: #4a82d0; }
.translate svg { width: 24px; height: 24px; }
.vbar.main { width: 17px; }
.vbar.main .thumb { margin-top: 135px; }
.sheets { grid-column: 1 / 3; display: flex; background: linear-gradient(90deg, #c8daf2, #edf4fd 75%, #d4e3f5); }
.sheet { display: grid; margin-left: 4px; font-size: 11px; }
.sheet svg, .sheet span { grid-area: 1 / 1; }
.sheet svg { width: 56px; height: 20px; }
.sheet span { line-height: 16px; align-self: start; }
.sheets .heart { margin: 3px 5px 0 auto; }
.grip { width: 2px; margin-right: 1px; background: repeating-linear-gradient(#8b95a5 0 2px, transparent 2px 4px); }
.hbar { width: 238px; display: flex; align-items: center; background: #f0f0f0; border: 1px solid #fff; height: 18px; margin-right: 16px; }
.hbar button { width: 16px; height: 16px; }
.hbar .thumb { width: 17px; height: 15px; background: #cdcdcd; margin-left: 57px; }
.hbar .end { margin-left: auto; }

.cmd { flex: none; padding-top: 1px; }
.log { height: 59px; margin-top: 1px; display: flex; border: 1px solid #808080; background: #fff; }
.log textarea { flex: 1; border: 0; resize: none; padding: 2px; background: #fff; }
.line { display: flex; height: 22px; margin-bottom: 1px; }
.line label { width: 58px; padding-left: 8px; background: #b6d3fc; line-height: 21px; }
.line input { flex: 1; min-width: 0; border: 1px solid #808080; background: #fff; padding: 0 3px; }

.status { flex: none; height: 20px; display: flex; align-items: center; border: 1px solid #7a8fae; background: linear-gradient(#eaf2fb, #c9dcf3); font-size: 11px; color: #1f3a78; }
.status span { line-height: 18px; }
.status .name { width: 294px; padding-left: 6px; font-size: 12px; border-right: 1px solid #f2f7fd; }
.status .count { width: 98px; padding-left: 5px; }
.status button { width: 20px; height: 18px; border-left: 1px solid #f2f7fd; }
.status svg { width: 16px; height: 18px; }
.coord { flex: 1; padding-left: 7px; }
.size { padding: 0 11px; border-left: 1px solid #f2f7fd; }
```
